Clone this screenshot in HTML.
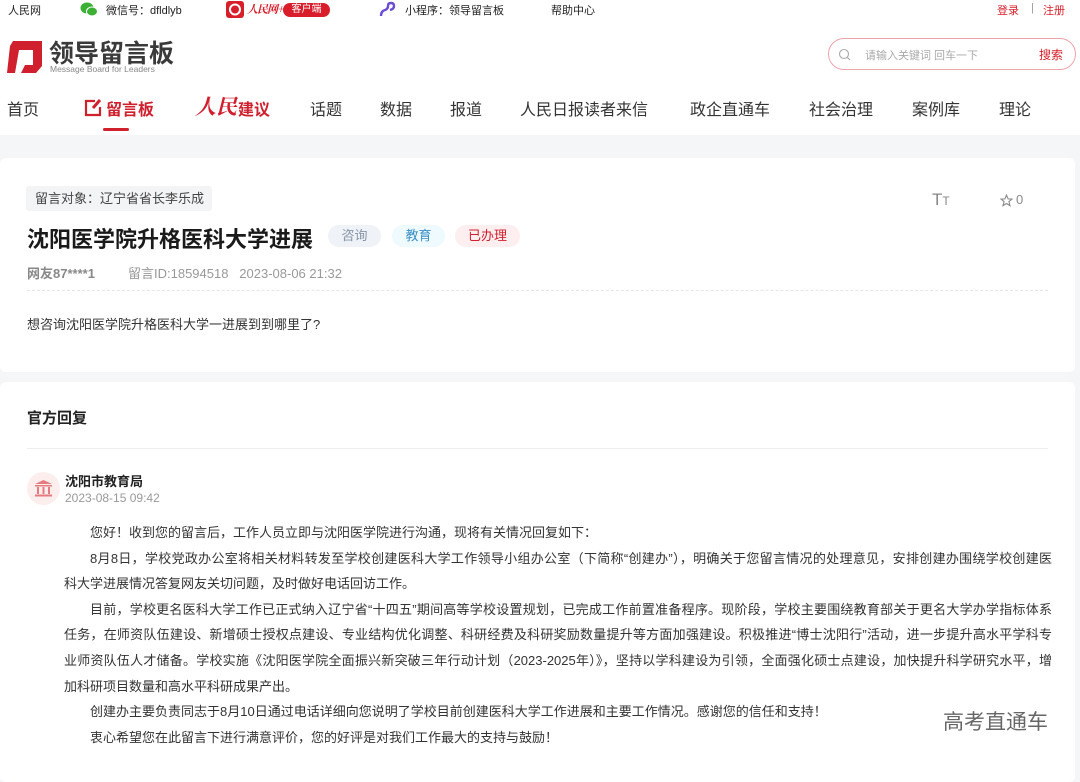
<!DOCTYPE html>
<html><head><meta charset="utf-8"><style>
*{margin:0;padding:0;box-sizing:border-box}
body{width:1080px;height:760px;overflow:hidden;background:#f5f6f8;font-family:"Liberation Sans","Noto Sans CJK SC",sans-serif;color:#333;position:relative}
.a{position:absolute;white-space:nowrap}
.hdr{position:absolute;left:0;top:0;width:1080px;height:135px;background:#fff}
.card{position:absolute;left:0;width:1075px;background:#fff;border-radius:6px}
.nav{font-size:16px;color:#333;top:96px}
.pill{position:absolute;top:225px;height:22px;border-radius:11px;font-size:13px;line-height:22px;text-align:center}
.p{position:absolute;left:64px;width:988px;font-size:13px;line-height:25.6px;white-space:nowrap;color:#333}
.p div{height:25.6px}
.j{text-align:justify;text-align-last:justify}
.i{padding-left:26px}
</style></head><body>
<div class="hdr"></div>
<div class="a" style="left:8px;top:2px;font-size:11px;color:#222">人民网</div>
<svg class="a" style="left:80px;top:2px" width="18" height="15" viewBox="0 0 18 15"><ellipse cx="7" cy="6" rx="6.5" ry="5.5" fill="#3cb034"/><ellipse cx="12" cy="9.5" rx="5.5" ry="4.5" fill="#3cb034" stroke="#fff" stroke-width="1"/></svg>
<div class="a" style="left:106px;top:2px;font-size:11px;color:#222">微信号：dfldlyb</div>
<svg class="a" style="left:226px;top:1px" width="18" height="17"><rect width="18" height="17" rx="3" fill="#d81e2a"/><circle cx="9" cy="8.5" r="5" fill="none" stroke="#fff" stroke-width="2"/></svg>
<div class="a" style="left:247px;top:1px;font-size:11px;color:#d81e2a;font-style:italic;font-family:'Noto Serif CJK SC',serif;font-weight:bold;letter-spacing:-1px">人民网+</div>
<div class="a" style="left:283px;top:3px;width:47px;height:14px;border-radius:7px;background:#d81e2a;color:#fff;font-size:10px;line-height:14px;text-align:center">客户端</div>
<svg class="a" style="left:378px;top:1px" width="18" height="17"><path d="M3 15 Q3 10 7 9 Q10 8 10 5 Q10 2 13 2 Q16 2 16 5 Q16 8 12 9" fill="none" stroke="#6b4bd8" stroke-width="2.4"/></svg>
<div class="a" style="left:405px;top:2px;font-size:11px;color:#222">小程序：领导留言板</div>
<div class="a" style="left:551px;top:2px;font-size:11px;color:#222">帮助中心</div>
<div class="a" style="left:997px;top:2px;font-size:11px;color:#d81e2a">登录</div>
<div class="a" style="left:1031px;top:2px;font-size:11px;color:#999">|</div>
<div class="a" style="left:1043px;top:2px;font-size:11px;color:#d81e2a">注册</div>
<svg class="a" style="left:7px;top:38px" width="36" height="35" viewBox="0 0 36 35"><path d="M6 3 L35 3 L35 28 L29 35 L14 35 L18 27 L26 27 L26 12 L12 12 L8 35 L0 35 L3 8 Z" fill="#d0202e"/></svg>
<div class="a" style="left:49px;top:34px;font-size:25px;font-weight:bold;color:#3a3a3a">领导留言板</div>
<div class="a" style="left:50px;top:64px;font-size:8.5px;color:#888">Message Board for Leaders</div>
<div class="a" style="left:828px;top:38px;width:248px;height:32px;border:1px solid #eea3ac;border-radius:16px"></div>
<svg class="a" style="left:838px;top:48px" width="13" height="13"><circle cx="6" cy="6" r="4.5" fill="none" stroke="#aaa" stroke-width="1.1"/><path d="M9.5 9.5 L12 12" stroke="#aaa" stroke-width="1.1"/></svg>
<div class="a" style="left:865px;top:47px;font-size:11px;color:#aaa">请输入关键词 回车一下</div>
<div class="a" style="left:1039px;top:46px;font-size:12px;color:#d81e2a">搜索</div>
<div class="a nav" style="left:7px">首页</div>
<svg class="a" style="left:84px;top:99px" width="19" height="18"><path d="M11 2 H2 V16 H16 V8" fill="none" stroke="#d0202e" stroke-width="2.2"/><path d="M16 1 L9 9" stroke="#d0202e" stroke-width="3"/></svg>
<div class="a nav" style="left:106px;color:#d0202e;font-weight:bold">留言板</div>
<div class="a" style="left:103px;top:128px;width:26px;height:3px;background:#d0202e;border-radius:2px"></div>
<div class="a" style="left:195px;top:91px;font-size:21px;color:#d0202e;font-style:italic;font-family:'Noto Serif CJK SC',serif;font-weight:bold">人民</div>
<div class="a nav" style="left:238px;color:#d0202e;font-weight:bold">建议</div>
<div class="a nav" style="left:310px">话题</div>
<div class="a nav" style="left:380px">数据</div>
<div class="a nav" style="left:450px">报道</div>
<div class="a nav" style="left:520px">人民日报读者来信</div>
<div class="a nav" style="left:690px">政企直通车</div>
<div class="a nav" style="left:809px">社会治理</div>
<div class="a nav" style="left:912px">案例库</div>
<div class="a nav" style="left:999px">理论</div>
<div class="card" style="top:158px;height:214px"></div>
<div class="a" style="left:26px;top:186px;width:186px;height:25px;background:#f3f4f6;border-radius:3px;font-size:13px;line-height:25px;padding-left:9px;color:#444">留言对象：辽宁省省长李乐成</div>
<div class="a" style="left:27px;top:222px;font-size:22px;font-weight:bold;color:#1a1a1a">沈阳医学院升格医科大学进展</div>
<div class="pill" style="left:328px;width:53px;background:#eff2f6;color:#8895a8">咨询</div>
<div class="pill" style="left:392px;width:53px;background:#eefafd;color:#3a8fc8">教育</div>
<div class="pill" style="left:455px;width:65px;background:#fdeef0;color:#d0202e">已办理</div>
<div class="a" style="left:27px;top:263px;font-size:13px;color:#888;font-weight:bold">网友87****1</div>
<div class="a" style="left:128px;top:263px;font-size:13px;color:#999">留言ID:18594518&nbsp;&nbsp;&nbsp;2023-08-06 21:32</div>
<div class="a" style="left:27px;top:290px;width:1021px;border-top:1px dashed #e6e6e6"></div>
<div class="a" style="left:27px;top:314px;font-size:13px;color:#333">想咨询沈阳医学院升格医科大学一进展到到哪里了?</div>
<div class="a" style="left:932px;top:190px;font-size:17px;color:#888">T<span style="font-size:12px">T</span></div>
<svg class="a" style="left:1000px;top:194px" width="13" height="13" viewBox="0 0 24 24"><path d="M12 2 L15 9 L22 9.5 L16.5 14 L18.5 21.5 L12 17.5 L5.5 21.5 L7.5 14 L2 9.5 L9 9 Z" fill="none" stroke="#888" stroke-width="2"/></svg>
<div class="a" style="left:1016px;top:192px;font-size:13px;color:#888">0</div>
<div class="card" style="top:382px;height:400px"></div>
<div class="a" style="left:27px;top:407px;font-size:15px;font-weight:bold;color:#222">官方回复</div>
<div class="a" style="left:27px;top:448px;width:1021px;height:1px;background:#eee"></div>
<div class="a" style="left:27px;top:472px;width:33px;height:33px;border-radius:50%;background:#fdeeee"></div>
<svg class="a" style="left:34px;top:479px" width="19" height="18" viewBox="0 0 19 18"><path d="M1 5 L9.5 1 L18 5 Z" fill="#e57a80"/><rect x="1" y="6" width="17" height="1.5" fill="#e57a80"/><rect x="3" y="8" width="2" height="7" fill="#e57a80"/><rect x="8.5" y="8" width="2" height="7" fill="#e57a80"/><rect x="14" y="8" width="2" height="7" fill="#e57a80"/><rect x="1" y="15.5" width="17" height="2" fill="#e57a80"/></svg>
<div class="a" style="left:65px;top:471px;font-size:13px;font-weight:bold;color:#222">沈阳市教育局</div>
<div class="a" style="left:65px;top:491px;font-size:12px;color:#999">2023-08-15 09:42</div>
<div class="p" style="top:520px">
<div class="i">您好！收到您的留言后，工作人员立即与沈阳医学院进行沟通，现将有关情况回复如下：</div>
<div class="i j">8月8日，学校党政办公室将相关材料转发至学校创建医科大学工作领导小组办公室（下简称“创建办”），明确关于您留言情况的处理意见，安排创建办围绕学校创建医</div>
<div>科大学进展情况答复网友关切问题，及时做好电话回访工作。</div>
<div class="i j">目前，学校更名医科大学工作已正式纳入辽宁省“十四五”期间高等学校设置规划，已完成工作前置准备程序。现阶段，学校主要围绕教育部关于更名大学办学指标体系</div>
<div class="j">任务，在师资队伍建设、新增硕士授权点建设、专业结构优化调整、科研经费及科研奖励数量提升等方面加强建设。积极推进“博士沈阳行”活动，进一步提升高水平学科专</div>
<div class="j">业师资队伍人才储备。学校实施《沈阳医学院全面振兴新突破三年行动计划（2023-2025年）》，坚持以学科建设为引领，全面强化硕士点建设，加快提升科学研究水平，增</div>
<div>加科研项目数量和高水平科研成果产出。</div>
<div class="i">创建办主要负责同志于8月10日通过电话详细向您说明了学校目前创建医科大学工作进展和主要工作情况。感谢您的信任和支持！</div>
<div class="i">衷心希望您在此留言下进行满意评价，您的好评是对我们工作最大的支持与鼓励！</div>
</div>
<div class="a" style="left:943px;top:706px;font-size:21px;color:#666">高考直通车</div>
</body></html>
